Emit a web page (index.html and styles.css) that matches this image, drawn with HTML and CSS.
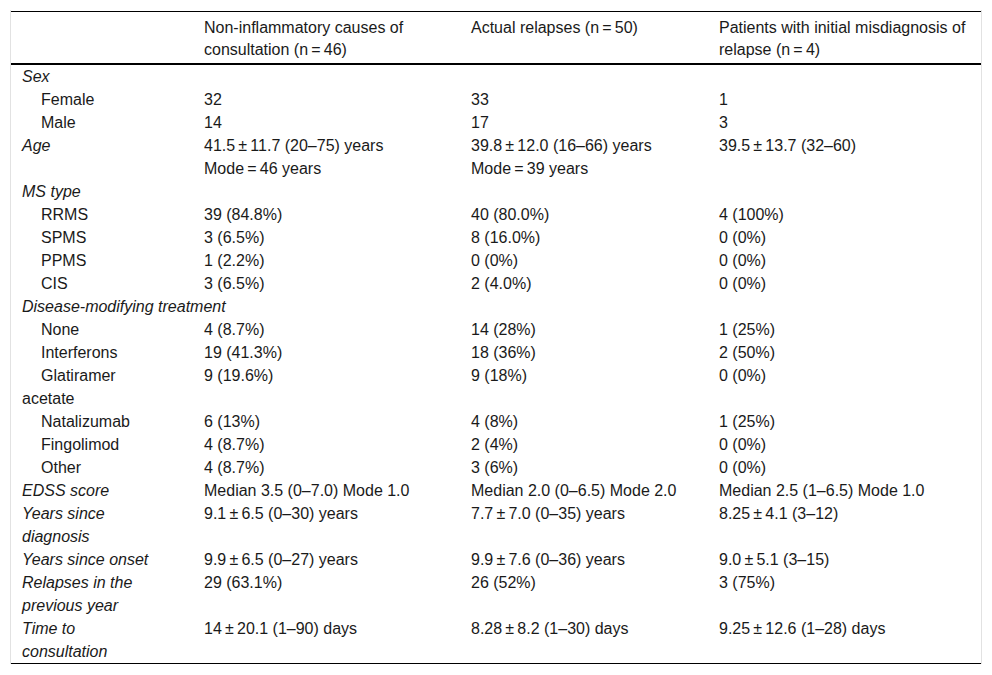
FILE: index.html
```html
<!DOCTYPE html>
<html>
<head>
<meta charset="utf-8">
<link rel="stylesheet" href="styles.css">
</head>
<body>
<div class="frame">
<table class="data">
<colgroup>
<col class="c1"><col class="c2"><col class="c3"><col class="c4">
</colgroup>
<thead>
<tr>
<th></th>
<th>Non-inflammatory causes of consultation (n&#8201;=&#8201;46)</th>
<th>Actual relapses (n&#8201;=&#8201;50)</th>
<th>Patients with initial misdiagnosis of relapse (n&#8201;=&#8201;4)</th>
</tr>
</thead>
<tbody>
<tr><td class="group" colspan="4">Sex</td></tr>
<tr><td class="sub">Female</td><td>32</td><td>33</td><td>1</td></tr>
<tr><td class="sub">Male</td><td>14</td><td>17</td><td>3</td></tr>
<tr><td class="group">Age</td><td>41.5&#8201;±&#8201;11.7 (20–75) years<br>Mode&#8201;=&#8201;46 years</td><td>39.8&#8201;±&#8201;12.0 (16–66) years<br>Mode&#8201;=&#8201;39 years</td><td>39.5&#8201;±&#8201;13.7 (32–60)</td></tr>
<tr><td class="group" colspan="4">MS type</td></tr>
<tr><td class="sub">RRMS</td><td>39 (84.8%)</td><td>40 (80.0%)</td><td>4 (100%)</td></tr>
<tr><td class="sub">SPMS</td><td>3 (6.5%)</td><td>8 (16.0%)</td><td>0 (0%)</td></tr>
<tr><td class="sub">PPMS</td><td>1 (2.2%)</td><td>0 (0%)</td><td>0 (0%)</td></tr>
<tr><td class="sub">CIS</td><td>3 (6.5%)</td><td>2 (4.0%)</td><td>0 (0%)</td></tr>
<tr><td class="group" colspan="4">Disease-modifying treatment</td></tr>
<tr><td class="sub">None</td><td>4 (8.7%)</td><td>14 (28%)</td><td>1 (25%)</td></tr>
<tr><td class="sub">Interferons</td><td>19 (41.3%)</td><td>18 (36%)</td><td>2 (50%)</td></tr>
<tr><td class="sub">Glatiramer acetate</td><td>9 (19.6%)</td><td>9 (18%)</td><td>0 (0%)</td></tr>
<tr><td class="sub">Natalizumab</td><td>6 (13%)</td><td>4 (8%)</td><td>1 (25%)</td></tr>
<tr><td class="sub">Fingolimod</td><td>4 (8.7%)</td><td>2 (4%)</td><td>0 (0%)</td></tr>
<tr><td class="sub">Other</td><td>4 (8.7%)</td><td>3 (6%)</td><td>0 (0%)</td></tr>
<tr><td class="group">EDSS score</td><td>Median 3.5 (0–7.0) Mode 1.0</td><td>Median 2.0 (0–6.5) Mode 2.0</td><td>Median 2.5 (1–6.5) Mode 1.0</td></tr>
<tr><td class="group">Years since diagnosis</td><td>9.1&#8201;±&#8201;6.5 (0–30) years</td><td>7.7&#8201;±&#8201;7.0 (0–35) years</td><td>8.25&#8201;±&#8201;4.1 (3–12)</td></tr>
<tr><td class="group">Years since onset</td><td>9.9&#8201;±&#8201;6.5 (0–27) years</td><td>9.9&#8201;±&#8201;7.6 (0–36) years</td><td>9.0&#8201;±&#8201;5.1 (3–15)</td></tr>
<tr><td class="group">Relapses in the previous year</td><td>29 (63.1%)</td><td>26 (52%)</td><td>3 (75%)</td></tr>
<tr><td class="group">Time to consultation</td><td>14&#8201;±&#8201;20.1 (1–90) days</td><td>8.28&#8201;±&#8201;8.2 (1–30) days</td><td>9.25&#8201;±&#8201;12.6 (1–28) days</td></tr>
</tbody>
</table>
</div>
</body>
</html>
```
FILE: styles.css
```css
html, body {
  margin: 0;
  padding: 0;
  background: #fff;
}
body {
  padding: 10px 10px 0 10px;
  font-family: "Liberation Sans", Arial, sans-serif;
  font-size: 16px;
  color: #1a1a1a;
}
.frame {
  width: 970px;
  border-left: 1px solid #e2e2e2;
  border-right: 1px solid #e2e2e2;
  padding-top: 1px;
}
.data {
  width: 970px;
  border-collapse: collapse;
  table-layout: fixed;
  border-top: 1px solid #000;
  border-bottom: 1px solid #000;
}
.c1 { width: 182px; }
.c2 { width: 267px; }
.c3 { width: 248px; }
.c4 { width: 273px; }
.data th {
  font-weight: normal;
  text-align: left;
  vertical-align: top;
  line-height: 22px;
  padding: 5px 11px 2px 11px;
  border-bottom: 2px solid #000;
}
.data td {
  vertical-align: top;
  line-height: 23px;
  padding: 0 11px;
}
.data td.group {
  font-style: italic;
  padding-right: 35px;
}
.data td.group[colspan] {
  padding-right: 11px;
}
.data td.sub {
  text-indent: 19px;
  padding-right: 35px;
}
```
